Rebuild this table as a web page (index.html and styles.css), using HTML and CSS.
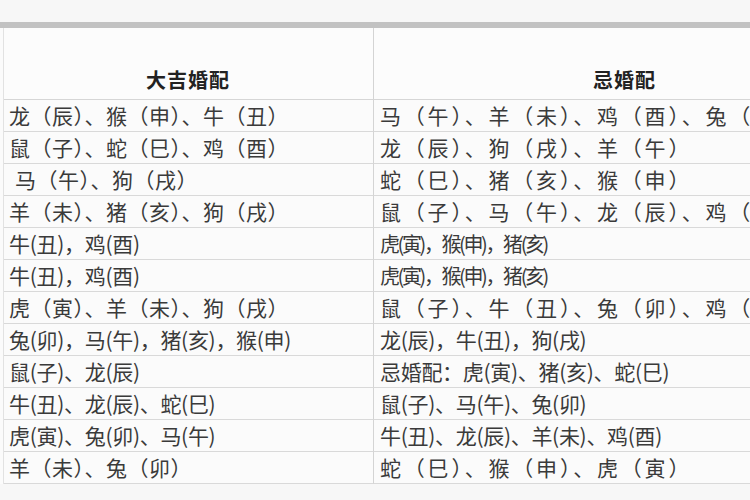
FILE: index.html
```html
<!DOCTYPE html>
<html lang="zh-CN">
<head>
<meta charset="utf-8">
<link rel="stylesheet" href="styles.css">
</head>
<body>
<div class="page">
  <div class="topbar"></div>
  <div class="sheet">
    <div class="grid">
      <div class="cell head left">大吉婚配</div>
      <div class="cell head right">忌婚配</div>

      <div class="cell left">龙（辰）、猴（申）、牛（丑）</div>
      <div class="cell right">马（午）、羊（未）、鸡（酉）、兔（卯）</div>

      <div class="cell left">鼠（子）、蛇（巳）、鸡（酉）</div>
      <div class="cell right">龙（辰）、狗（戌）、羊（午）</div>

      <div class="cell left indent">马（午）、狗（戌）</div>
      <div class="cell right">蛇（巳）、猪（亥）、猴（申）</div>

      <div class="cell left">羊（未）、猪（亥）、狗（戌）</div>
      <div class="cell right">鼠（子）、马（午）、龙（辰）、鸡（酉）</div>

      <div class="cell left tight">牛(丑)，鸡(酉)</div>
      <div class="cell right tight small">虎(寅)，猴(申)，猪(亥)</div>

      <div class="cell left tight">牛(丑)，鸡(酉)</div>
      <div class="cell right tight small">虎(寅)，猴(申)，猪(亥)</div>

      <div class="cell left">虎（寅）、羊（未）、狗（戌）</div>
      <div class="cell right">鼠（子）、牛（丑）、兔（卯）、鸡（酉）</div>

      <div class="cell left tight">兔(卯)，马(午)，猪(亥)，猴(申)</div>
      <div class="cell right tight">龙(辰)，牛(丑)，狗(戌)</div>

      <div class="cell left tight">鼠(子)、龙(辰)</div>
      <div class="cell right tight">忌婚配：虎(寅)、猪(亥)、蛇(巳)</div>

      <div class="cell left tight">牛(丑)、龙(辰)、蛇(巳)</div>
      <div class="cell right tight">鼠(子)、马(午)、兔(卯)</div>

      <div class="cell left tight">虎(寅)、兔(卯)、马(午)</div>
      <div class="cell right tight">牛(丑)、龙(辰)、羊(未)、鸡(酉)</div>

      <div class="cell left">羊（未）、兔（卯）</div>
      <div class="cell right">蛇（巳）、猴（申）、虎（寅）</div>
    </div>
  </div>
</div>
</body>
</html>
```

FILE: styles.css
```css
html, body {
  margin: 0;
  padding: 0;
  background: #f7f7f7;
}

.page {
  width: 750px;
  height: 500px;
  overflow: hidden;
  padding-top: 22px;
  box-sizing: border-box;
  font-family: "Noto Sans CJK SC", "Noto Sans", sans-serif;
  color: #3a3a3a;
}

.topbar {
  height: 6px;
  background: #c2c2c2;
  box-shadow: 0 1px 1px #d8d8d8;
}

.sheet {
  width: 880px;
  padding-left: 3px;
  background: #fbfbfb;
}

.grid {
  display: grid;
  grid-template-columns: 370px 507px;
  border-left: 1px solid #e2e2e2;
}

.cell {
  font-size: 21px;
  line-height: 31px;
  height: 31px;
  border-bottom: 1px solid #d9d9d9;
  white-space: nowrap;
  overflow: hidden;
  padding: 0 6px;
}

.left {
  border-right: 1px solid #d4d4d4;
  padding-left: 5px;
  letter-spacing: 0.5px;
}

.right {
  padding-left: 6px;
  letter-spacing: 2.8px;
}

.tight {
  letter-spacing: -0.3px;
}

.cell.small {
  font-size: 20px;
  letter-spacing: -2.4px;
}

.indent {
  padding-left: 11px;
}

.head {
  height: 72px;
  line-height: 20px;
  display: flex;
  align-items: flex-end;
  justify-content: center;
  padding-bottom: 9px;
  box-sizing: border-box;
  font-size: 20px;
  font-weight: bold;
  color: #222;
  letter-spacing: 1px;
  border-bottom: 1px solid #d6d6d6;
  background: #fcfcfc;
}

.head.right {
  justify-content: flex-start;
  padding-left: 219px;
}
```
